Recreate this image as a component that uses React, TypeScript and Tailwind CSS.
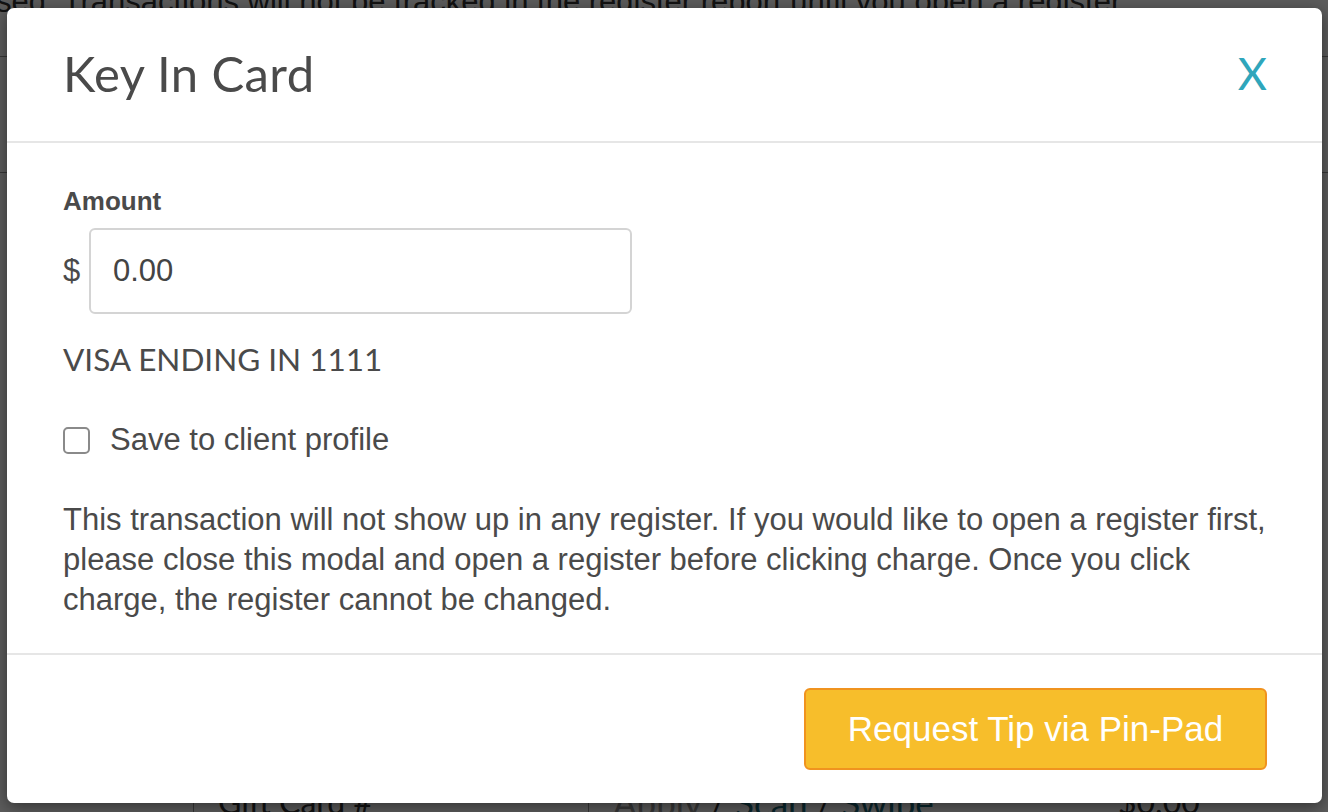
import React from "react";

const sans = "font-['Liberation_Sans',Arial,sans-serif]";
const lato = "font-['Lato','Noto_Sans',sans-serif]";

function BackgroundPage() {
  return (
    <div className={`flex h-full flex-col bg-white text-[#333] ${sans}`}>
      <p className="-ml-[4px] -mt-[13px] whitespace-nowrap text-[31px] leading-[30px]">
        sed. Transactions will not be tracked in the register report until you open a register.
      </p>
      <div className="mt-[39px] border-b border-[#999]" />
      <div className="mt-[115px] border-b border-[#999]" />
      <div className="flex-1" />
      <div className={`flex h-[30px] items-start ${lato} text-[32px] leading-[40px]`}>
        <div className="w-[193px]" />
        <div className="w-[395px] border-l border-[#999] pl-[24px]">Gift Card #</div>
        <div className="w-[530px] border-l border-[#999] pl-[24px] text-[35px]">
          <span className="text-[#999]">Apply</span> / <span className="text-[#1a6a7a]">Scan</span> /{" "}
          <span className="text-[#1a6a7a]">Swipe</span>
        </div>
        <div>$0.00</div>
      </div>
    </div>
  );
}

function KeyInCardModal() {
  return (
    <div className="flex h-[795px] w-[1315px] flex-col rounded-[7px] bg-white shadow-[0_4px_16px_rgba(0,0,0,0.45)]">
      <div className="flex h-[135px] shrink-0 items-center justify-between border-b-2 border-[#e6e6e6] pl-[56px] pr-[55px]">
        <h2 className={`${lato} -mt-[3px] text-[49px] font-normal leading-none tracking-[0.4px] text-[#4a4a4a]`}>
          Key In Card
        </h2>
        <button className={`${lato} -mt-[2px] text-[45px] leading-none text-[#2fa6bb]`}>X</button>
      </div>

      <div className={`flex flex-1 flex-col pl-[56px] pr-[56px] pt-[45px] text-[#4a4a4a] ${sans}`}>
        <label className="text-[26px] font-bold leading-[26px]">Amount</label>
        <div className="mt-[14px] flex items-center">
          <span className="w-[26px] text-[31px]">$</span>
          <input
            readOnly
            value="0.00"
            className="h-[86px] w-[543px] rounded-[6px] border-2 border-[#d4d4d4] px-[22px] text-[31px] text-[#444] outline-none"
          />
        </div>
        <div className={`mt-[28px] ${lato} text-[31.5px] leading-[34px] text-[#4a4a4a]`}>VISA ENDING IN 1111</div>
        <label className="mt-[48px] flex items-center gap-[20px]">
          <span className="h-[27px] w-[27px] rounded-[5px] border-2 border-[#8a8a8a] bg-white" />
          <span className="text-[31px] leading-[32px]">Save to client profile</span>
        </label>
        <p className="mt-[44px] text-[31px] leading-[40px]">
          This transaction will not show up in any register. If you would like to open a register first, please close
          this modal and open a register before clicking charge. Once you click charge, the register cannot be
          changed.
        </p>
      </div>

      <div className="flex h-[150px] shrink-0 items-start justify-end border-t-2 border-[#e6e6e6] pr-[55px] pt-[33px]">
        <button
          className={`h-[82px] w-[463px] rounded-[6px] border-2 border-[#f0931f] bg-[#f7be2b] text-[35px] text-white ${sans}`}
        >
          Request Tip via Pin-Pad
        </button>
      </div>
    </div>
  );
}

export default function App() {
  return (
    <div className="relative h-[812px] w-full overflow-hidden">
      <BackgroundPage />
      <div className="absolute inset-0 bg-black/[0.64] pl-[7px] pt-[8px]">
        <KeyInCardModal />
      </div>
    </div>
  );
}
